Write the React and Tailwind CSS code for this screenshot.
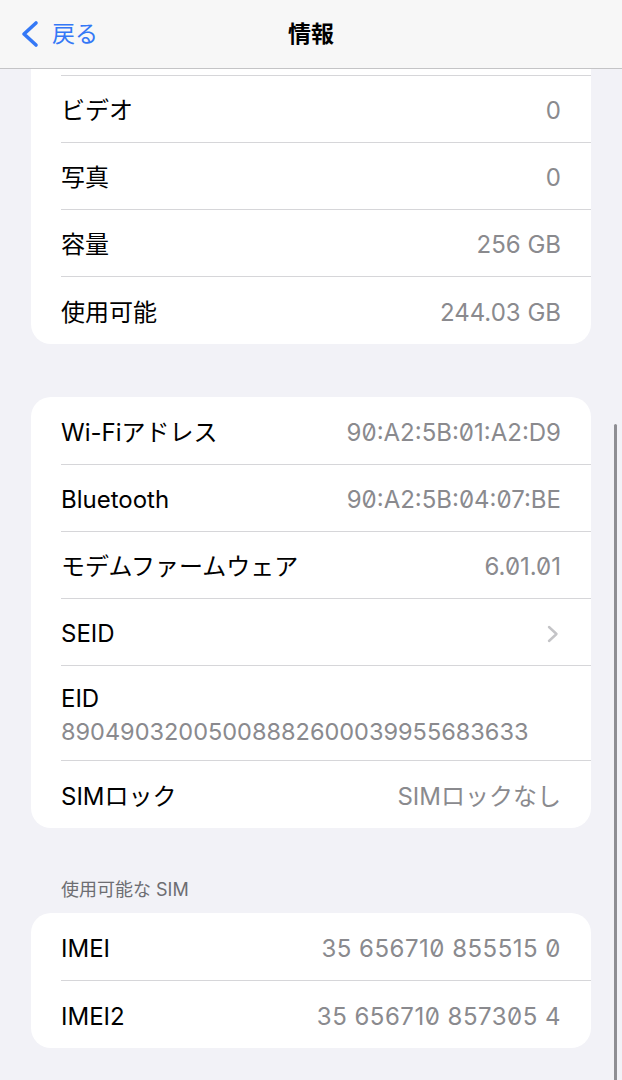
function Row({ label, value, mono, wide, chevron, last }) {
    return (
        <div className={"flex items-center justify-between pr-[30px] pt-[4px] " + (last ? "h-[67px]" : "h-[66px]")}>
            <span className="text-black">{label}</span>
            {chevron ? (
                <svg width="12" height="18" viewBox="0 0 12 18" className="mr-[2px]">
                    <path d="M2 2 L9.5 9 L2 16" fill="none" stroke="#c4c4c7" strokeWidth="2.4" strokeLinecap="round" strokeLinejoin="round" />
                </svg>
            ) : (
                <span className={"text-[#8a8a8e] " + (mono ? "[font-feature-settings:'zero'] " : "") + (wide ? "tracking-[0.5px]" : "")}>{value}</span>
            )}
        </div>
    );
}

function Card({ rows, roundTop = true, topStrip = false }) {
    return (
        <div className={"bg-white pl-[30px] " + (roundTop ? "rounded-[20px]" : "rounded-b-[20px]")}>
            {topStrip && <div className="h-[6px]" />}
            {rows.map((r, i) => (
                <div key={i} className={i > 0 || topStrip ? "border-t border-[#d6d6d9]" : "pt-px"}>
                    {r.custom ? r.custom : <Row {...r} last={i === rows.length - 1} />}
                </div>
            ))}
        </div>
    );
}

export default function App() {
    return (
        <div className="relative w-[622px] h-[1080px] overflow-hidden bg-[#f2f2f7] text-[24px] font-['Inter','Noto_Sans_CJK_JP',sans-serif]">
            <div className="relative h-[69px] bg-[#f7f7f7] border-b border-[#c4c4c6] flex items-center">
                <div className="flex items-center pl-[20px] gap-[13px] text-[#3478f6]">
                    <svg width="19" height="28" viewBox="0 0 19 28">
                        <path d="M16 3 L4 14 L16 25" fill="none" stroke="#3478f6" strokeWidth="3.6" strokeLinecap="round" strokeLinejoin="round" />
                    </svg>
                    <span className="text-[23px]">戻る</span>
                </div>
                <div className="absolute inset-0 flex items-center justify-center">
                    <span className="font-semibold text-[23px] text-black">情報</span>
                </div>
            </div>

            <div className="px-[31px]">
                <Card
                    roundTop={false}
                    topStrip
                    rows={[
                        { label: "ビデオ", value: "0" },
                        { label: "写真", value: "0" },
                        { label: "容量", value: "256 GB" },
                        { label: "使用可能", value: "244.03 GB" },
                    ]}
                />

                <div className="h-[53px]" />

                <Card
                    rows={[
                        { label: "Wi-Fiアドレス", value: "90:A2:5B:01:A2:D9", mono: true },
                        { label: "Bluetooth", value: "90:A2:5B:04:07:BE", mono: true },
                        { label: "モデムファームウェア", value: "6.01.01", mono: true },
                        { label: "SEID", chevron: true },
                        {
                            custom: (
                                <div className="h-[94px] flex flex-col justify-center pr-[30px] pt-[3px]">
                                    <span className="text-black leading-[33px]">EID</span>
                                    <span className="text-[#8a8a8e] text-[23.5px] leading-[33px]">89049032005008882600039955683633</span>
                                </div>
                            ),
                        },
                        { label: "SIMロック", value: "SIMロックなし" },
                    ]}
                />

                <div className="pt-[51px] pb-[12px] pl-[30px] text-[18px] leading-[22px] text-[#6d6d72]">使用可能な SIM</div>

                <Card
                    rows={[
                        { label: "IMEI", value: "35 656710 855515 0", mono: true, wide: true },
                        { label: "IMEI2", value: "35 656710 857305 4", mono: true, wide: true },
                    ]}
                />
            </div>

            <div className="absolute right-[5px] top-[424px] w-[3px] h-[660px] rounded-full bg-[#8e8e93]" />
        </div>
    );
}
